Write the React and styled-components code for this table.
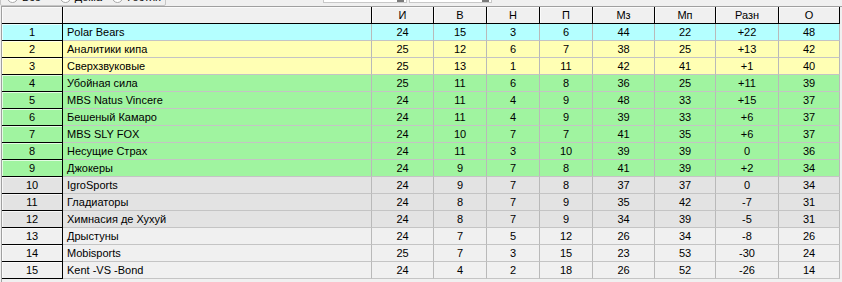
import React from "react";
import styled, { createGlobalStyle } from "styled-components";

const GlobalStyle = createGlobalStyle`
  html, body {
    margin: 0;
    padding: 0;
    background: #f0f0f0;
    overflow: hidden;
  }
  body {
    font-family: "Liberation Sans", Arial, sans-serif;
    font-size: 11px;
    color: #000;
  }
`;

const COLS = "61px 309px 62px 53px 53px 53px 62px 61px 63px 61px";

const Window = styled.div`
  width: 842px;
  height: 282px;
  overflow: hidden;
  background: #f0f0f0;
`;

const TopBar = styled.div`
  height: 6px;
  display: flex;
  align-items: flex-end;
  overflow: hidden;
`;

const GroupBox = styled.div`
  flex: none;
  width: 166px;
  height: 20px;
  margin-bottom: 0;
  border: 1px solid #c6c6c6;
  border-radius: 2px;
  box-sizing: border-box;
  display: flex;
  align-items: flex-end;
  gap: 0;
  padding: 0 0 1px 6px;
`;

const Radio = styled.label`
  display: flex;
  align-items: center;
  gap: 4px;
  width: 53px;
  height: 13px;
  line-height: 13px;
  font-size: 11px;
  color: #000;
`;

const Dot = styled.span`
  width: 11px;
  height: 11px;
  border-radius: 50%;
  border: 1px solid #a8a8a8;
  background: #fff;
  box-sizing: border-box;
`;

const Combo = styled.div`
  flex: none;
  width: ${(p) => p.$w}px;
  height: 20px;
  margin-left: ${(p) => p.$ml}px;
  margin-bottom: 3px;
  background: #fff;
  border: 1px solid #c8c8c8;
  box-sizing: border-box;
  position: relative;
`;

const ComboButton = styled.span`
  position: absolute;
  right: 2px;
  bottom: 0;
  width: 7px;
  height: 3px;
  background: #7a7a7a;
`;

const Grid = styled.div`
  margin-left: 1px;
  border-top: 1px solid #a0a0a0;
  border-left: 1px solid #a0a0a0;
  height: 276px;
  background: #f0f0f0;
`;

const Row = styled.div`
  display: grid;
  grid-template-columns: ${COLS};
  height: 17px;
  background: ${(p) => p.$bg || "#f0f0f0"};
  width: max-content;
`;

const Cell = styled.div`
  box-sizing: border-box;
  height: 17px;
  line-height: 16px;
  border-right: 1px solid ${(p) => (p.$fixed ? "#000" : "#b9b9b9")};
  border-bottom: 1px solid ${(p) => (p.$fixed ? "#000" : "#c4c4c4")};
  text-align: ${(p) => (p.$left ? "left" : "center")};
  padding-left: ${(p) => (p.$left ? "4px" : "0")};
  white-space: nowrap;
  overflow: hidden;
  background: ${(p) => (p.$head ? "#f0f0f0" : "transparent")};
  box-shadow: ${(p) => (p.$fixed ? "inset 1px 1px 0 rgba(255,255,255,0.7)" : "none")};
`;

const COLORS = {
  cyan: "#b4ffff",
  yellow: "#ffffb4",
  green: "#a0f4a0",
  gray: "#e3e3e3",
  light: "#f0f0f0",
};

const HEAD = ["И", "В", "Н", "П", "Мз", "Мп", "Разн", "О"];

const TEAMS = [
  ["Polar Bears", 24, 15, 3, 6, 44, 22, "+22", 48, "cyan"],
  ["Аналитики кипа", 25, 12, 6, 7, 38, 25, "+13", 42, "yellow"],
  ["Сверхзвуковые", 25, 13, 1, 11, 42, 41, "+1", 40, "yellow"],
  ["Убойная сила", 25, 11, 6, 8, 36, 25, "+11", 39, "green"],
  ["MBS Natus Vincere", 24, 11, 4, 9, 48, 33, "+15", 37, "green"],
  ["Бешеный Камаро", 24, 11, 4, 9, 39, 33, "+6", 37, "green"],
  ["MBS SLY FOX", 24, 10, 7, 7, 41, 35, "+6", 37, "green"],
  ["Несущие Страх", 24, 11, 3, 10, 39, 39, "0", 36, "green"],
  ["Джокеры", 24, 9, 7, 8, 41, 39, "+2", 34, "green"],
  ["IgroSports", 24, 9, 7, 8, 37, 37, "0", 34, "gray"],
  ["Гладиаторы", 24, 8, 7, 9, 35, 42, "-7", 31, "gray"],
  ["Химнасия де Хухуй", 24, 8, 7, 9, 34, 39, "-5", 31, "gray"],
  ["Дрыстуны", 24, 7, 5, 12, 26, 34, "-8", 26, "light"],
  ["Mobisports", 25, 7, 3, 15, 23, 53, "-30", 24, "light"],
  ["Kent -VS -Bond", 24, 4, 2, 18, 26, 52, "-26", 14, "light"],
];

const App = () => {
  return (
    <Window>
      <GlobalStyle />
      <TopBar>
        <GroupBox>
          <Radio><Dot />Все</Radio>
          <Radio><Dot />Дома</Radio>
          <Radio><Dot />Гостях</Radio>
        </GroupBox>
        <Combo $w={84} $ml={157}>
          <ComboButton />
        </Combo>
        <Combo $w={83} $ml={2}>
          <ComboButton />
        </Combo>
      </TopBar>
      <Grid>
        <Row>
          <Cell $fixed $head />
          <Cell $fixed $head />
          {HEAD.map((h) => (
            <Cell key={h} $fixed $head>{h}</Cell>
          ))}
        </Row>
        {TEAMS.map((t, i) => {
          const [name, ...rest] = t;
          const color = rest.pop();
          return (
            <Row key={name} $bg={COLORS[color]}>
              <Cell $fixed>{i + 1}</Cell>
              <Cell $left>{name}</Cell>
              {rest.map((v, j) => (
                <Cell key={j}>{v}</Cell>
              ))}
            </Row>
          );
        })}
      </Grid>
    </Window>
  );
};

export default App;
